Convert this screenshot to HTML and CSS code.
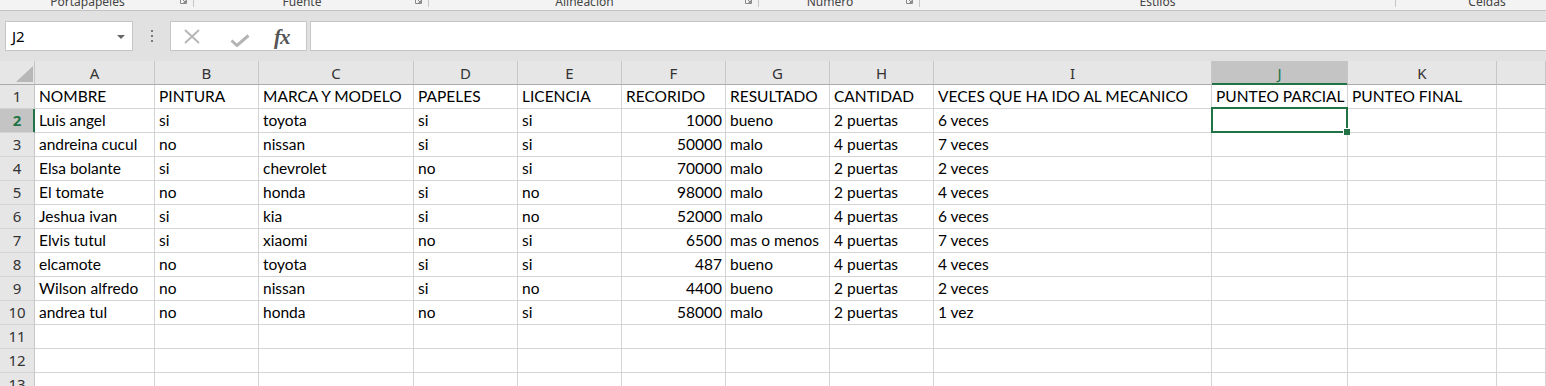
FILE: index.html
```html
<!DOCTYPE html>
<html lang="es">
<head>
    <meta charset="UTF-8">
    <meta name="viewport" content="width=device-width, initial-scale=1.0">
    <title>Libro1 - Excel</title>
    <link rel="stylesheet" href="styles.css">
</head>
<body>
    <div class="ribbon">
        <div class="group g-clip"><span class="label">Portapapeles</span><span class="launcher"><svg width="7" height="7" viewBox="0 0 7 7"><path d="M0.5 0.5h6v6h-6z M2.5 2.5l3 3 M3.5 5.5h2v-2" fill="none" stroke="#8a8a8a" stroke-width="1"/></svg></span><span class="sep"></span></div>
        <div class="group g-font"><span class="label">Fuente</span><span class="launcher"><svg width="7" height="7" viewBox="0 0 7 7"><path d="M0.5 0.5h6v6h-6z M2.5 2.5l3 3 M3.5 5.5h2v-2" fill="none" stroke="#8a8a8a" stroke-width="1"/></svg></span><span class="sep"></span></div>
        <div class="group g-align"><span class="label">Alineación</span><span class="launcher"><svg width="7" height="7" viewBox="0 0 7 7"><path d="M0.5 0.5h6v6h-6z M2.5 2.5l3 3 M3.5 5.5h2v-2" fill="none" stroke="#8a8a8a" stroke-width="1"/></svg></span><span class="sep"></span></div>
        <div class="group g-number"><span class="label">Número</span><span class="launcher"><svg width="7" height="7" viewBox="0 0 7 7"><path d="M0.5 0.5h6v6h-6z M2.5 2.5l3 3 M3.5 5.5h2v-2" fill="none" stroke="#8a8a8a" stroke-width="1"/></svg></span><span class="sep"></span></div>
        <div class="group g-styles"><span class="label">Estilos</span><span class="sep"></span></div>
        <div class="group g-cells"><span class="label">Celdas</span></div>
    </div>

    <div class="formula-row">
        <div class="name-box">
            <span class="ref">J2</span>
            <span class="caret"></span>
        </div>
        <div class="dots"><i></i><i></i><i></i></div>
        <div class="fx-buttons">
            <svg class="btn-cancel" width="16" height="15" viewBox="0 0 16 15"><path d="M1 1L15 14M15 1L1 14" stroke="#b4b4b4" stroke-width="1.8" fill="none"/></svg>
            <svg class="btn-enter" width="20" height="13" viewBox="0 0 20 13"><path d="M1.5 6.5L7 11.5L18.5 1.5" stroke="#b4b4b4" stroke-width="3" fill="none"/></svg>
            <span class="fx">fx</span>
        </div>
        <div class="formula-input"></div>
    </div>

    <div class="sheet" id="sheet"></div>

    <script>
        const columns = ['A', 'B', 'C', 'D', 'E', 'F', 'G', 'H', 'I', 'J', 'K', ''];
        const data = [
            ['NOMBRE', 'PINTURA', 'MARCA Y MODELO', 'PAPELES', 'LICENCIA', 'RECORIDO', 'RESULTADO', 'CANTIDAD', 'VECES QUE HA IDO AL MECANICO', 'PUNTEO PARCIAL', 'PUNTEO FINAL'],
            ['Luis angel', 'si', 'toyota', 'si', 'si', 1000, 'bueno', '2 puertas', '6 veces'],
            ['andreina cucul', 'no', 'nissan', 'si', 'si', 50000, 'malo', '4 puertas', '7 veces'],
            ['Elsa bolante', 'si', 'chevrolet', 'no', 'si', 70000, 'malo', '2 puertas', '2 veces'],
            ['El tomate', 'no', 'honda', 'si', 'no', 98000, 'malo', '2 puertas', '4 veces'],
            ['Jeshua ivan', 'si', 'kia', 'si', 'no', 52000, 'malo', '4 puertas', '6 veces'],
            ['Elvis tutul', 'si', 'xiaomi', 'no', 'si', 6500, 'mas o menos', '4 puertas', '7 veces'],
            ['elcamote', 'no', 'toyota', 'si', 'si', 487, 'bueno', '4 puertas', '4 veces'],
            ['Wilson alfredo', 'no', 'nissan', 'si', 'no', 4400, 'bueno', '2 puertas', '2 veces'],
            ['andrea tul', 'no', 'honda', 'no', 'si', 58000, 'malo', '2 puertas', '1 vez'],
            [], [], []
        ];
        const activeRow = 2;
        const activeCol = 'J';

        const sheet = document.getElementById('sheet');
        let html = '<div class="corner"><svg width="17" height="16" viewBox="0 0 17 16"><path d="M17 0V16H0z" fill="#b7b7b7"/></svg></div>';

        columns.forEach(c => {
            html += `<div class="col-head${c === activeCol ? ' sel' : ''}">${c}</div>`;
        });

        data.forEach((row, r) => {
            const n = r + 1;
            html += `<div class="row-head${n === activeRow ? ' sel' : ''}">${n}</div>`;
            columns.forEach((c, i) => {
                const value = row[i] === undefined ? '' : row[i];
                let cls = 'cell';
                if (typeof value === 'number') cls += ' num';
                if (n === activeRow && c === activeCol) {
                    html += `<div class="${cls} active"><div class="cursor"><span class="handle"></span></div></div>`;
                } else {
                    html += `<div class="${cls}">${value}</div>`;
                }
            });
        });

        sheet.innerHTML = html;
    </script>
</body>
</html>
```

FILE: styles.css
```css
* {
    box-sizing: border-box;
}
body {
    margin: 0;
    width: 1546px;
    height: 386px;
    overflow: hidden;
    background-color: #ffffff;
    font-family: "Noto Sans", "Open Sans", sans-serif;
}

/* ribbon group captions, cut off at the top */
.ribbon {
    display: flex;
    height: 11px;
    background-color: #f3f3f3;
    border-bottom: 1px solid #c3c3c3;
    overflow: hidden;
}
.group {
    display: flex;
    align-items: flex-start;
    flex: none;
}
.g-clip { width: 194px; }
.g-font { width: 235px; }
.g-align { width: 330px; }
.g-number { width: 161px; }
.g-styles { width: 476px; }
.g-cells { width: 182px; }
.label {
    flex: 1;
    text-align: center;
    font-size: 12px;
    line-height: 12px;
    margin-top: -4px;
    color: #444444;
    white-space: nowrap;
}
.launcher {
    width: 18px;
    display: flex;
}
.launcher svg {
    margin-left: 5px;
    margin-top: -3px;
}
.sep {
    width: 1px;
    height: 7px;
    background-color: #c6c6c6;
}

/* name box + formula bar */
.formula-row {
    display: flex;
    align-items: center;
    height: 50px;
    padding: 10px 0;
    background-color: #e1e1e1;
}
.name-box {
    margin-left: 5px;
    width: 128px;
    height: 30px;
    background-color: #ffffff;
    border: 1px solid #c6c6c6;
    display: flex;
    align-items: center;
    justify-content: space-between;
    padding: 0 7px 0 6px;
}
.ref {
    font-size: 15px;
    color: #000000;
}
.caret {
    width: 0;
    height: 0;
    border-left: 4px solid transparent;
    border-right: 4px solid transparent;
    border-top: 4px solid #666666;
    margin-top: 1px;
}
.dots {
    width: 37px;
    display: flex;
    flex-direction: column;
    align-items: center;
    gap: 3px;
    padding-left: 1px;
}
.dots i {
    width: 2px;
    height: 2px;
    background-color: #777777;
}
.fx-buttons {
    width: 137px;
    height: 30px;
    background-color: #ffffff;
    border: 1px solid #c6c6c6;
    display: flex;
    align-items: center;
}
.btn-cancel {
    margin-left: 13px;
    margin-top: 1px;
}
.btn-enter {
    margin-left: 30px;
    margin-top: 8px;
}
.fx {
    margin-left: 24px;
    font-family: "Liberation Serif", serif;
    font-style: italic;
    font-weight: bold;
    font-size: 21px;
    color: #555555;
    margin-top: 3px;
    letter-spacing: -1px;
}
.formula-input {
    flex: 1;
    height: 30px;
    margin-left: 3px;
    background-color: #ffffff;
    border: 1px solid #c6c6c6;
    border-right: none;
}

/* grid */
.sheet {
    display: grid;
    grid-template-columns: 35px 120px 104px 155px 104px 104px 104px 104px 104px 278px 136px 149px 1fr;
    grid-auto-rows: 24px;
}
.corner {
    background-color: #e6e6e6;
    border-right: 1px solid #c6c6c6;
    border-bottom: 1px solid #ababab;
    display: flex;
    justify-content: flex-end;
    align-items: flex-end;
    padding: 0 1px 2px 0;
}
.col-head {
    background-color: #e6e6e6;
    border-right: 1px solid #c6c6c6;
    border-bottom: 1px solid #ababab;
    text-align: center;
    font-size: 15px;
    line-height: 24px;
    color: #333333;
}
.col-head.sel {
    background-color: #c4c4c4;
    color: #217346;
    border-bottom-color: #217346;
    box-shadow: inset 0 -1px 0 #217346;
}
.row-head {
    background-color: #e6e6e6;
    border-right: 1px solid #c6c6c6;
    border-bottom: 1px solid #d4d4d4;
    text-align: center;
    font-size: 15px;
    line-height: 23px;
    color: #333333;
}
.row-head.sel {
    background-color: #c4c4c4;
    color: #217346;
    font-weight: bold;
    border-right-color: #217346;
    box-shadow: inset -1px 0 0 #217346;
}
.cell {
    border-right: 1px solid #d4d4d4;
    border-bottom: 1px solid #d4d4d4;
    font-family: Lato, "Liberation Sans", sans-serif;
    font-size: 15.5px;
    line-height: 23px;
    padding: 0 3px 0 4px;
    color: #000000;
    white-space: nowrap;
    overflow: hidden;
}
.cell.num {
    text-align: right;
}
.cell.active {
    position: relative;
    overflow: visible;
}
.cursor {
    position: absolute;
    left: -1px;
    top: -2px;
    width: 137px;
    height: 26px;
    border: 2px solid #217346;
    z-index: 2;
}
.handle {
    position: absolute;
    right: -4px;
    bottom: -4px;
    width: 7px;
    height: 7px;
    background-color: #217346;
    border-left: 1px solid #ffffff;
    border-top: 1px solid #ffffff;
}
```
